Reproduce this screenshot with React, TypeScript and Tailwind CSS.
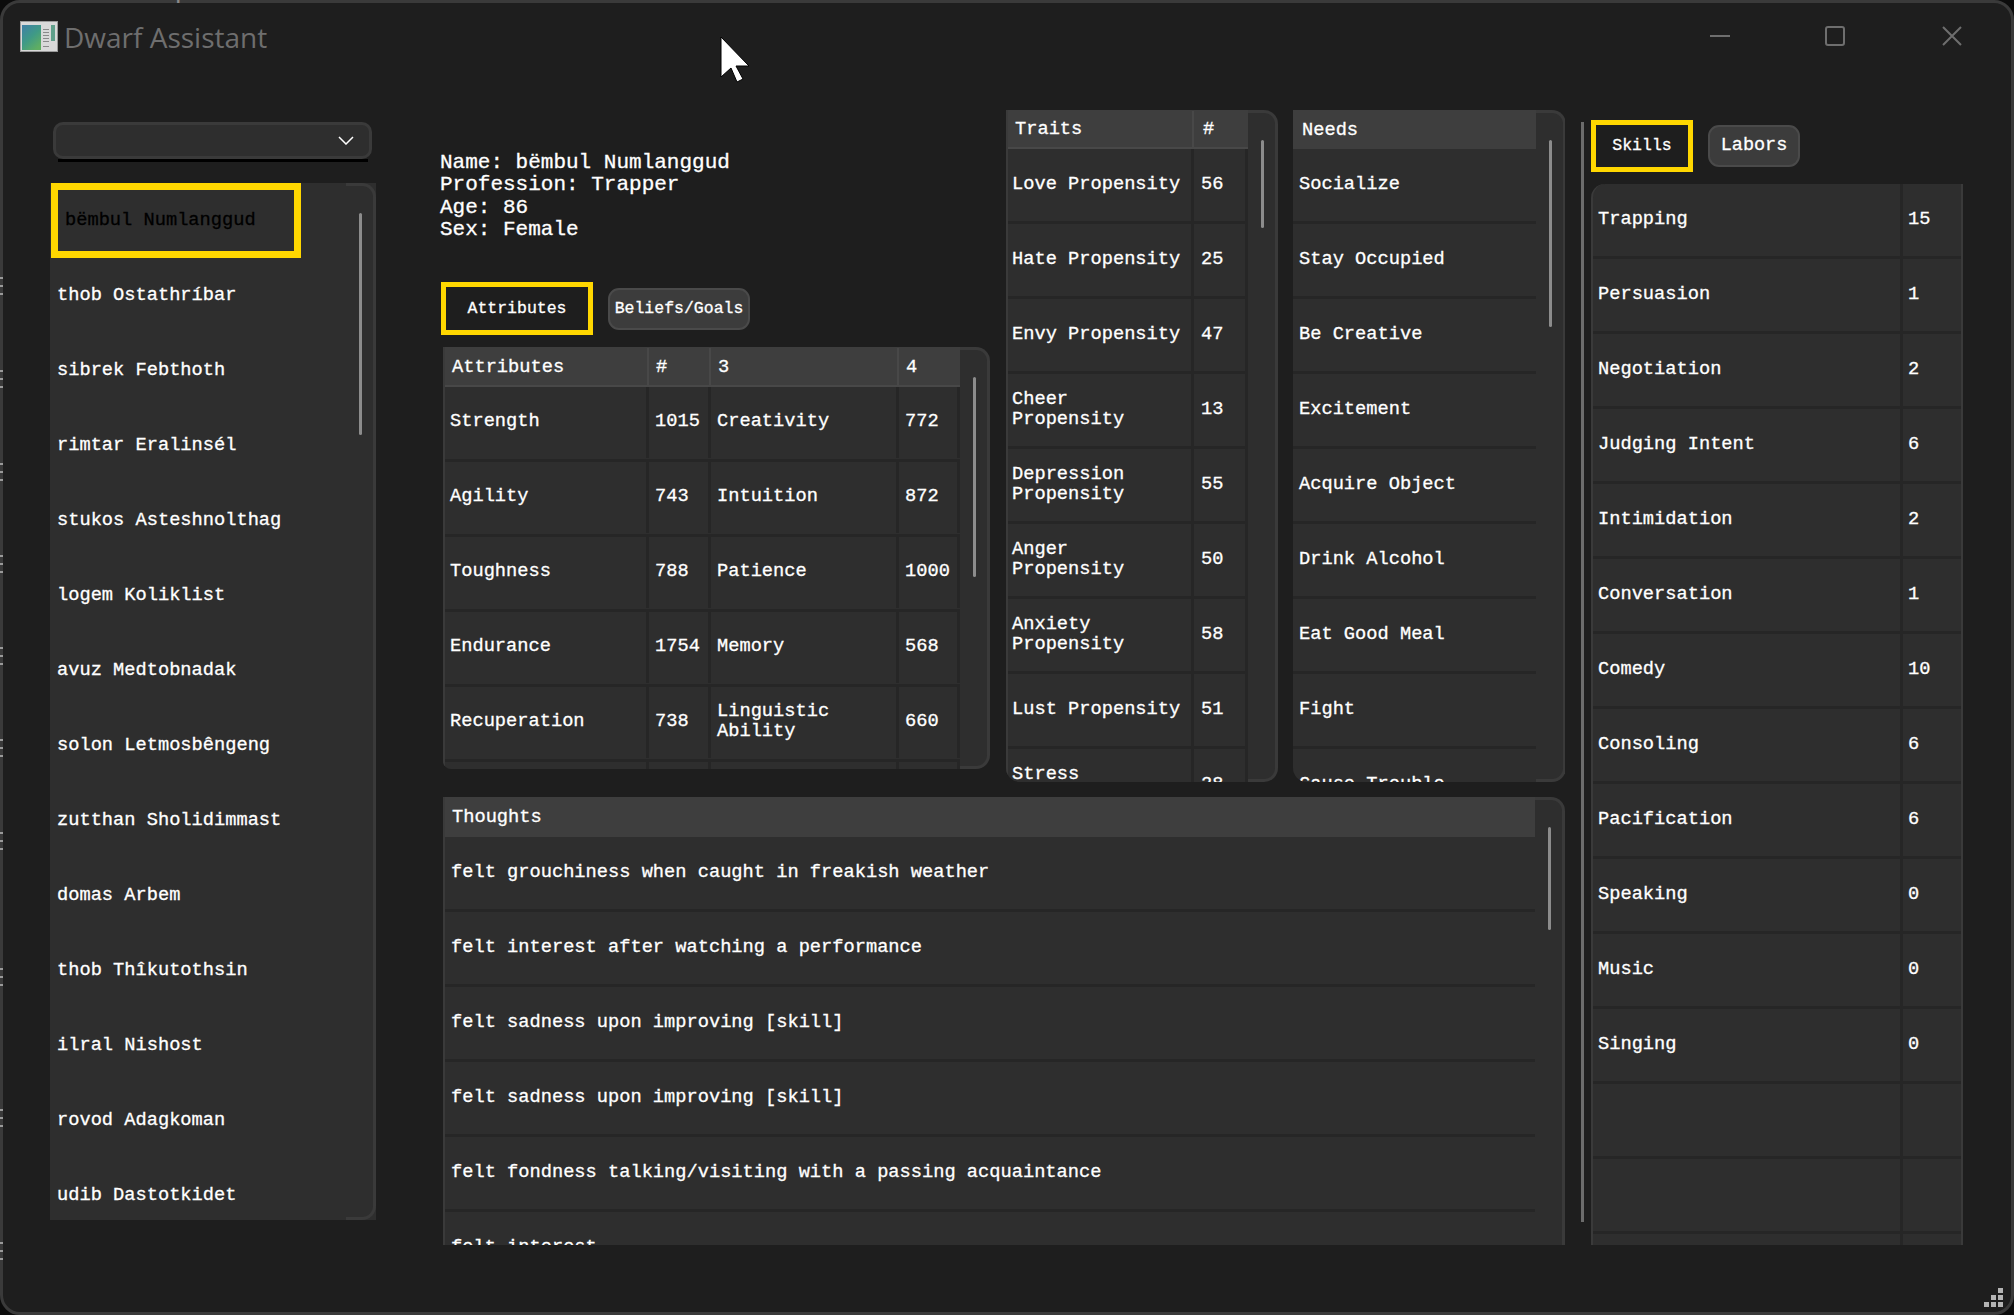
const dwarves = [
  "thob Ostathríbar",
  "sibrek Febthoth",
  "rimtar Eralinsél",
  "stukos Asteshnolthag",
  "logem Koliklist",
  "avuz Medtobnadak",
  "solon Letmosbêngeng",
  "zutthan Sholidimmast",
  "domas Arbem",
  "thob Thîkutothsin",
  "ilral Nishost",
  "rovod Adagkoman",
  "udib Dastotkidet",
];

const attributes = [
  ["Strength", "1015", "Creativity", "772"],
  ["Agility", "743", "Intuition", "872"],
  ["Toughness", "788", "Patience", "1000"],
  ["Endurance", "1754", "Memory", "568"],
  ["Recuperation", "738", "Linguistic Ability", "660"],
  ["", "", "", ""],
];

const traits = [
  ["Love Propensity", "56"],
  ["Hate Propensity", "25"],
  ["Envy Propensity", "47"],
  ["Cheer Propensity", "13"],
  ["Depression Propensity", "55"],
  ["Anger Propensity", "50"],
  ["Anxiety Propensity", "58"],
  ["Lust Propensity", "51"],
  ["Stress Vulnerability", "28"],
];

const needs = [
  "Socialize",
  "Stay Occupied",
  "Be Creative",
  "Excitement",
  "Acquire Object",
  "Drink Alcohol",
  "Eat Good Meal",
  "Fight",
  "Cause Trouble",
];

const thoughts = [
  "felt grouchiness when caught in freakish weather",
  "felt interest after watching a performance",
  "felt sadness upon improving [skill]",
  "felt sadness upon improving [skill]",
  "felt fondness talking/visiting with a passing acquaintance",
  "felt interest",
];

const skills = [
  ["Trapping", "15"],
  ["Persuasion", "1"],
  ["Negotiation", "2"],
  ["Judging Intent", "6"],
  ["Intimidation", "2"],
  ["Conversation", "1"],
  ["Comedy", "10"],
  ["Consoling", "6"],
  ["Pacification", "6"],
  ["Speaking", "0"],
  ["Music", "0"],
  ["Singing", "0"],
  ["", ""],
  ["", ""],
  ["", ""],
];

const edgeMarks = [277, 370, 463, 555, 647, 739, 832, 968, 1109, 1242];

const Cell = ({ text, width }: { text: string; width: string }) => (
  <div className={`${width} h-full shrink-0 flex items-center border-r-[3px] border-[#262626]`}>
    {text}
  </div>
);

const HeadCell = ({ text, width }: { text: string; width: string }) => (
  <div className={`${width} h-full shrink-0 flex items-center pl-[7px] border-r-2 border-[#484848]`}>
    {text}
  </div>
);

const Gutter = ({ thumb, open }: { thumb: string; open?: boolean }) => (
  <div
    className={
      open
        ? "w-[30px] shrink-0 h-full border-t-[3px] border-r-[3px] border-[#3a3a3a] rounded-tr-[14px] bg-[#2e2e2e]"
        : "w-[30px] shrink-0 h-full border-y-[3px] border-r-[3px] border-[#3a3a3a] rounded-r-[14px] bg-[#2e2e2e]"
    }
  >
    <div className={`${thumb} mt-[27px] ml-[13px] w-[3px] rounded-full bg-[#8c8c8c]`} />
  </div>
);

const Tab = ({ label, active }: { label: string; active?: boolean }) =>
  active ? (
    <div className="w-full h-full flex items-center justify-center border-[5px] border-[#ffd700] bg-[#1e1e1e] text-[16.5px]">
      {label}
    </div>
  ) : (
    <div className="w-full h-full flex items-center justify-center rounded-[11px] border-2 border-[#4a4a4a] bg-[#3c3c3c]">
      {label}
    </div>
  );

const App = () => {
  return (
    <div className="relative w-[2014px] h-[1315px] overflow-hidden bg-[#0c0c0c] text-white text-[18.7px] leading-[20px] [-webkit-text-stroke:0.3px] [font-family:'Liberation_Mono',monospace]">
      <div className="w-full h-full flex flex-col rounded-[20px] border-[3px] border-[#3a3a3a] bg-[#1e1e1e] overflow-hidden">
        {/* title bar */}
        <div className="h-[66px] shrink-0 flex items-center pl-[17px] text-[#6e6e6e] [-webkit-text-stroke:0px]">
          <svg width="38" height="31" viewBox="0 0 38 31" className="shrink-0">
            <defs>
              <linearGradient id="pane" x1="0" y1="0" x2="0.7" y2="1">
                <stop offset="0" stopColor="#3f7fa8" />
                <stop offset="0.55" stopColor="#3f9a86" />
                <stop offset="1" stopColor="#5fae62" />
              </linearGradient>
            </defs>
            <rect width="38" height="31" fill="#d9d9d9" />
            <rect x="0.5" y="0.5" width="37" height="30" fill="none" stroke="#9a9a9a" />
            <rect x="2" y="4" width="19" height="25" fill="url(#pane)" />
            <rect x="23" y="8" width="6" height="1" fill="#8a8a8a" />
            <rect x="23" y="11" width="6" height="1" fill="#8a8a8a" />
            <rect x="23" y="14" width="6" height="1" fill="#8a8a8a" />
            <rect x="23" y="17" width="6" height="1" fill="#8a8a8a" />
            <rect x="23" y="20" width="6" height="1" fill="#8a8a8a" />
            <rect x="23" y="25" width="6" height="1" fill="#8a8a8a" />
            <rect x="31" y="4" width="4" height="16" fill="#5f9f8a" />
          </svg>
          <span className="ml-[6px] pt-[2px] text-[28px] [font-family:'Open_Sans',sans-serif]">Dwarf Assistant</span>
          <svg width="20" height="2" viewBox="0 0 20 2" className="ml-auto mr-[95px]">
            <rect width="20" height="2" fill="#6e6e6e" />
          </svg>
          <svg width="20" height="20" viewBox="0 0 20 20" className="mr-[97px]">
            <rect x="1" y="1" width="18" height="18" rx="2" fill="none" stroke="#6e6e6e" strokeWidth="2" />
          </svg>
          <svg width="20" height="20" viewBox="0 0 20 20" className="mr-[49px]">
            <path d="M1 1 L19 19 M19 1 L1 19" stroke="#6e6e6e" strokeWidth="2" fill="none" />
          </svg>
        </div>

        <div className="flex items-start pl-[47px]">
          {/* dwarf list */}
          <div className="w-[326px] shrink-0 mt-[53px]">
            <div className="ml-[3px] w-[319px] h-[37px] flex items-center justify-end pr-[15px] rounded-[10px] border-[3px] border-[#3a3a3a] bg-[#2e2e2e]">
              <svg width="16" height="9" viewBox="0 0 16 9">
                <path d="M1 1 L8 8 L15 1" stroke="#ffffff" strokeWidth="1.5" fill="none" />
              </svg>
            </div>
            <div className="ml-[8px] w-[310px] h-[3px] bg-black" />
            <div className="mt-[21px] h-[1037px] flex overflow-hidden bg-[#2e2e2e]">
              <div className="w-[296px] shrink-0 h-full">
                <div className="ml-px w-[250px] h-[75px] flex items-center pl-[7px] pb-[2px] border-[7px] border-[#ffd700] text-black">
                  bëmbul Numlanggud
                </div>
                {dwarves.map((name, i) => (
                  <div key={i} className="h-[75px] flex items-center pl-[7px] pb-[2px]">
                    {name}
                  </div>
                ))}
              </div>
              <Gutter thumb="h-[222px]" />
            </div>
          </div>

          {/* centre */}
          <div className="w-[1122px] shrink-0 ml-[67px] mt-[41px] h-[1135px] flex flex-col">
            <div className="h-[672px] shrink-0 flex items-start">
              <div className="w-[547px] shrink-0 -ml-[2px]">
                <div className="-ml-px pt-[42px] text-[21px] leading-[22.3px]">
                  <div>Name: bëmbul Numlanggud</div>
                  <div>Profession: Trapper</div>
                  <div>Age: 86</div>
                  <div>Sex: Female</div>
                </div>
                <div className="mt-[41px] h-[53px] flex items-center text-[16.5px]">
                  <div className="w-[152px] h-[53px]">
                    <Tab label="Attributes" active />
                  </div>
                  <div className="ml-[15px] w-[142px] h-[42px]">
                    <Tab label="Beliefs/Goals" />
                  </div>
                </div>
                <div className="mt-[12px] ml-[2px] w-[547px] h-[422px] flex overflow-hidden rounded-bl-[8px]">
                  <div className="w-[517px] shrink-0 h-full bg-[#2e2e2e] border-l-2 border-[#3a3a3a]">
                    <div className="h-[40px] flex pt-[1px] bg-[#3e3e3e] border-b-2 border-[#484848]">
                      <HeadCell text="Attributes" width="w-[204px]" />
                      <HeadCell text="#" width="w-[62px]" />
                      <HeadCell text="3" width="w-[188px]" />
                      <div className="flex items-center pl-[7px]">4</div>
                    </div>
                    {attributes.map((row, i) => (
                      <div key={i} className="h-[75px] flex pb-[1px] border-b-[3px] border-[#262626] [&>div]:pb-[3px] [&>div]:pl-[6px] [&>div:first-child]:pl-[5px]">
                        <Cell text={row[0]} width="w-[204px]" />
                        <Cell text={row[1]} width="w-[62px]" />
                        <Cell text={row[2]} width="w-[188px]" />
                        <Cell text={row[3]} width="w-[61px]" />
                      </div>
                    ))}
                  </div>
                  <Gutter thumb="h-[200px]" />
                </div>
              </div>

              <div className="ml-[18px] w-[272px] h-[672px] flex overflow-hidden rounded-bl-[14px]">
                <div className="w-[242px] shrink-0 h-full bg-[#2e2e2e] border-l-2 border-[#3a3a3a]">
                  <div className="h-[39px] flex pt-[1px] bg-[#3e3e3e] border-b-2 border-[#484848]">
                    <HeadCell text="Traits" width="w-[186px]" />
                    <div className="flex items-center pl-[9px]">#</div>
                  </div>
                  {traits.map((row, i) => (
                    <div key={i} className="h-[75px] flex border-b-[3px] border-[#262626] [&>div]:pb-[2px] [&>div]:pl-[7px] [&>div:first-child]:pl-[4px]">
                      <Cell text={row[0]} width="w-[186px]" />
                      <Cell text={row[1]} width="w-[54px]" />
                    </div>
                  ))}
                </div>
                <Gutter thumb="h-[88px]" />
              </div>

              <div className="ml-[15px] w-[272px] h-[672px] flex overflow-hidden rounded-bl-[14px]">
                <div className="w-[243px] shrink-0 h-full bg-[#2e2e2e]">
                  <div className="h-[39px] flex items-center pl-[9px] bg-[#3e3e3e]">Needs</div>
                  {needs.map((need, i) => (
                    <div key={i} className="h-[75px] flex items-center pl-[6px] pb-[2px] border-b-[3px] border-[#262626]">
                      {need}
                    </div>
                  ))}
                </div>
                <Gutter thumb="h-[187px]" />
              </div>
            </div>

            <div className="mt-[15px] h-[448px] flex overflow-hidden">
              <div className="w-[1092px] shrink-0 h-full bg-[#2e2e2e] border-l-2 border-[#3a3a3a]">
                <div className="h-[40px] flex items-center pl-[7px] bg-[#3e3e3e]">Thoughts</div>
                {thoughts.map((thought, i) => (
                  <div key={i} className="h-[75px] flex items-center pl-[6px] pb-[2px] border-b-[3px] border-[#262626]">
                    {thought}
                  </div>
                ))}
              </div>
              <Gutter thumb="h-[103px]" open />
            </div>
          </div>

          {/* splitter */}
          <div className="w-[3px] h-[1100px] shrink-0 ml-[16px] mt-[53px] bg-[#6c6c6c]" />

          {/* skills */}
          <div className="w-[372px] shrink-0 ml-[7px] mt-[51px]">
            <div className="h-[52px] flex items-center">
              <div className="w-[102px] h-[52px]">
                <Tab label="Skills" active />
              </div>
              <div className="ml-[15px] w-[92px] h-[42px] text-[18.5px]">
                <Tab label="Labors" />
              </div>
            </div>
            <div className="mt-[12px] h-[1061px] overflow-hidden rounded-tl-[14px] bg-[#2e2e2e] border-l-2 border-r-2 border-[#3a3a3a]">
              {skills.map((row, i) => (
                <div key={i} className="h-[75px] flex border-b-[3px] border-[#262626] [&>div]:pb-[2px] [&>div:first-child]:pl-[5px]">
                  <Cell text={row[0]} width="w-[310px]" />
                  <div className="flex items-center pl-[5px]">{row[1]}</div>
                </div>
              ))}
            </div>
          </div>
        </div>
      </div>

      {/* whatever is behind the window, showing through its frame */}
      <div className="absolute left-[50px] top-0 h-[3px] overflow-hidden text-[26px] text-[#8a8a8a] [-webkit-text-stroke:0px] whitespace-pre">
        <div className="leading-[3px] -mt-[8px]">column Update still click</div>
      </div>
      {edgeMarks.map((y) => (
        <div key={y} className="absolute left-0 w-[3px] flex flex-col gap-[6px]" style={{ top: y }}>
          <div className="h-[2px] bg-[#9a9a9a]" />
          <div className="h-[2px] bg-[#9a9a9a]" />
          <div className="h-[2px] bg-[#9a9a9a]" />
        </div>
      ))}

      {/* resize grip */}
      <svg width="20" height="20" viewBox="0 0 20 20" className="absolute left-[1984px] top-[1288px]">
        <path d="M14 0h5v5h-5z M7 7h5v5H7z M14 7h5v5h-5z M0 14h5v5H0z M7 14h5v5H7z M14 14h5v5h-5z" fill="#b4b4b4" />
      </svg>

      {/* mouse pointer */}
      <svg width="32" height="48" viewBox="0 0 32 48" className="absolute left-[720px] top-[36px]">
        <path d="M1 1 L29 30 L16 30 L23 43 L17 46 L11 32 L1 41 Z" fill="#ffffff" stroke="#000000" strokeWidth="1" />
      </svg>
    </div>
  );
};

export default App;
